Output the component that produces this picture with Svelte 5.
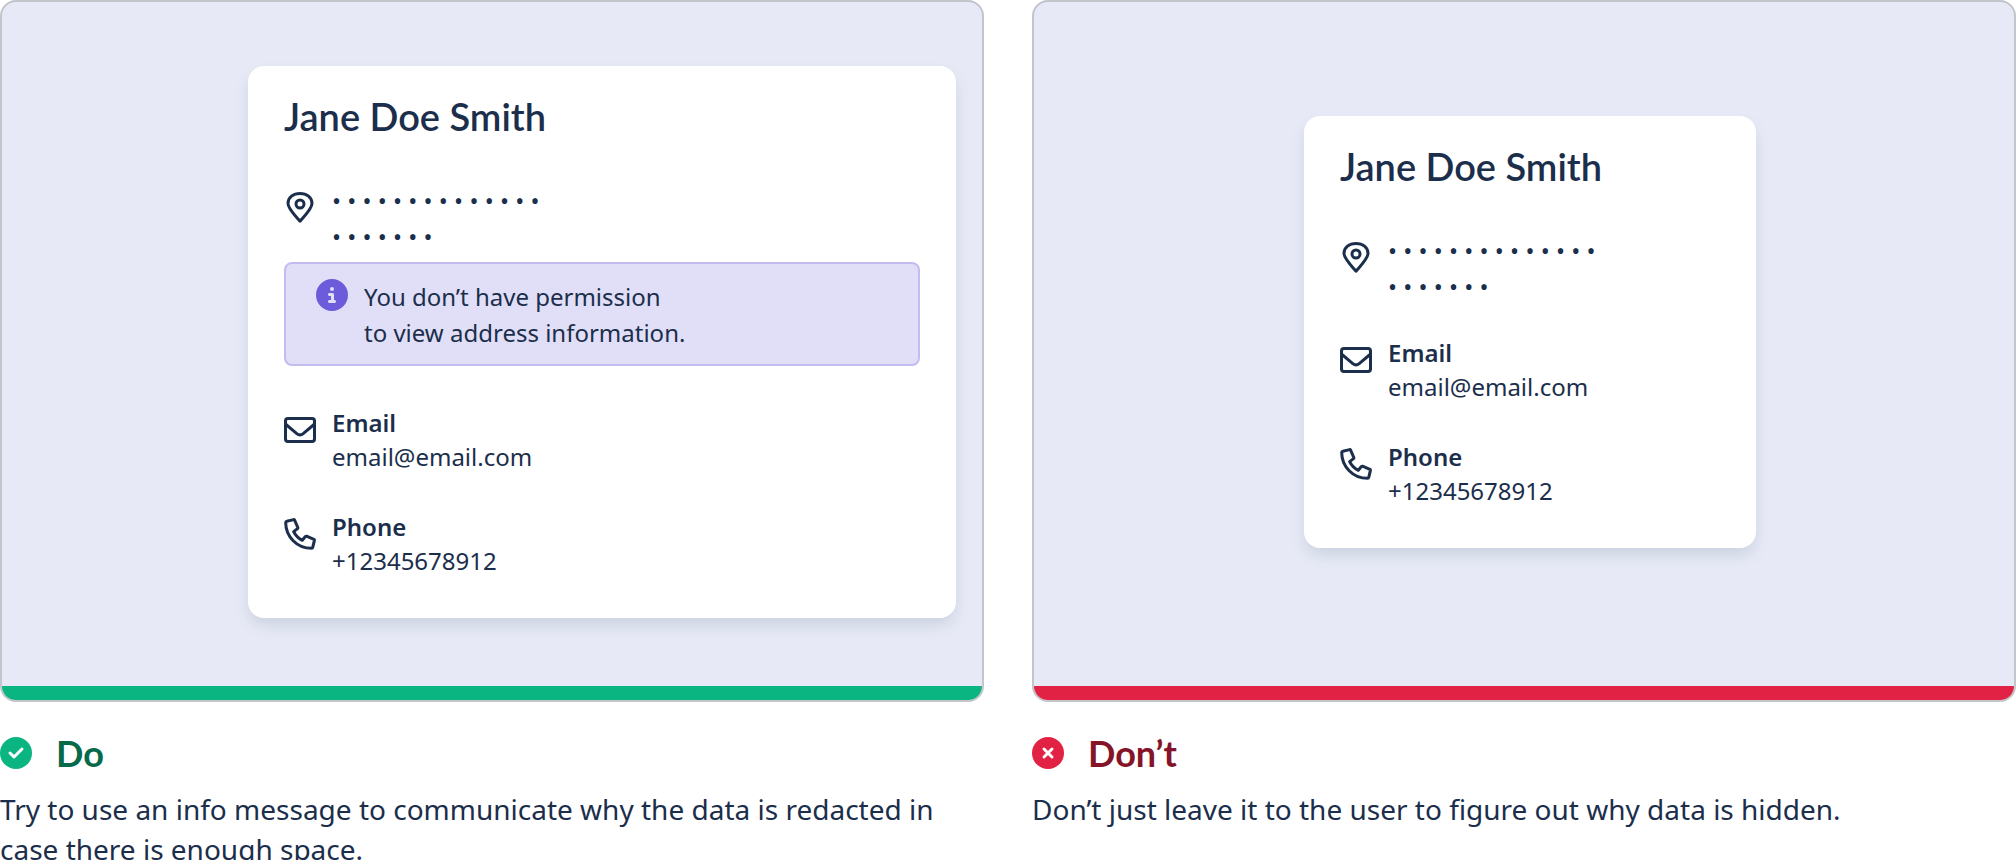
<script lang="ts">
    // Guideline examples, one panel each
    let examples = [
        {
            kind: 'do',
            title: 'Do',
            text: 'Try to use an info message to communicate why the data is redacted in case there is enough space.',
            showMessage: true
        },
        {
            kind: 'dont',
            title: 'Don’t',
            text: 'Don’t just leave it to the user to figure out why data is hidden.',
            showMessage: false
        }
    ];

    let contact = {
        name: 'Jane Doe Smith',
        email: 'email@email.com',
        phone: '+12345678912'
    };

    // Redacted text, one bullet per hidden character
    function redact(length: number) {
        return Array(length).fill('•').join(' ');
    }
</script>

<main class="guidelines">
    {#each examples as example}
        <section class="example {example.kind}">
            <div class="panel">
                <div class="stage">
                    <article class="card">
                        <h2>{contact.name}</h2>

                        <div class="row address">
                            <svg class="icon" viewBox="0 0 32 32" fill="none" stroke="currentColor" stroke-width="3" aria-hidden="true">
                                <path d="M16 30.2C12.2 25.6 4 17.6 4 12.4C4 6.3 9.3 2.5 16 2.5S28 6.3 28 12.4C28 17.6 19.8 25.6 16 30.2Z" stroke-linejoin="round" />
                                <circle cx="16" cy="13" r="4" />
                            </svg>
                            <p>{redact(14)}<br />{redact(7)}</p>
                        </div>

                        {#if example.showMessage}
                            <div class="message" role="status">
                                <svg class="info" viewBox="0 0 512 512" fill="currentColor" aria-hidden="true">
                                    <path d="M256 512A256 256 0 1 0 256 0a256 256 0 1 0 0 512zM216 336h24V272H216c-13.300 0-24-10.700-24-24s10.700-24 24-24h48c13.300 0 24 10.700 24 24v88h8c13.300 0 24 10.700 24 24s-10.700 24-24 24H216c-13.300 0-24-10.700-24-24s10.700-24 24-24zm40-208a32 32 0 1 1 0 64 32 32 0 1 1 0-64z" />
                                </svg>
                                <p>You don’t have permission<br />to view address information.</p>
                            </div>
                        {/if}

                        <div class="row">
                            <svg class="icon" viewBox="0 0 32 32" fill="none" stroke="currentColor" stroke-width="3" aria-hidden="true">
                                <rect x="1.500" y="4.500" width="29" height="23" rx="2.500" />
                                <path d="M2 10.500L12.800 19.600Q16 22.200 19.200 19.600L30 10.500" />
                            </svg>
                            <p><strong>Email</strong><br />{contact.email}</p>
                        </div>

                        <div class="row">
                            <svg class="icon" viewBox="0 0 32 32" fill="none" stroke="currentColor" stroke-width="3" stroke-linejoin="round" aria-hidden="true">
                                <path d="M2.800 3.200L9.700 1.600Q10.300 1.500 10.600 2.100L13.800 9.500Q14 10.100 13.500 10.600L9.700 13.700Q12.700 19.500 18.300 22.300L21.400 18.500Q21.900 18 22.500 18.200L29.900 21.400Q30.500 21.700 30.400 22.300L28.800 29.200Q28.600 30.300 27.500 30.300C13 30.300 1.700 18.600 1.700 4.500Q1.700 3.400 2.800 3.200Z" />
                            </svg>
                            <p><strong>Phone</strong><br />{contact.phone}</p>
                        </div>
                    </article>
                </div>
                <div class="bar"></div>
            </div>

            <h3>
                <svg class="badge" viewBox="0 0 32 32" aria-hidden="true">
                    <circle cx="16" cy="16" r="16" fill="currentColor" />
                    {#if example.kind === 'do'}
                        <path d="M10 16L14 20L22 12" />
                    {:else}
                        <path d="M12 12L20 20M20 12L12 20" />
                    {/if}
                </svg>
                {example.title}
            </h3>
            <p class="description">{example.text}</p>
        </section>
    {/each}
</main>

<style>
    :global(body) {
        background-color: #ffffff;
    }

    .guidelines {
        display: grid;
        grid-template-columns: 1fr 1fr;
        gap: 48px;
        color: #1b2e4b;
        font-family: "Noto Sans", sans-serif;
        font-size: 24px;
    }

    .example {
        display: flex;
        flex-direction: column;
    }

    .panel {
        display: flex;
        flex-direction: column;
        border: 2px solid #c3c5cb;
        border-radius: 16px;
        overflow: hidden;
        background-color: #e7eaf6;
    }

    .stage {
        display: flex;
        justify-content: center;
        align-items: flex-start;
    }

    .do .stage {
        padding: 64px 26px 68px 246px;
    }

    .dont .stage {
        padding: 114px 0 138px 12px;
    }

    .bar {
        height: 14px;
    }

    .do .bar {
        background-color: #0ab581;
    }

    .dont .bar {
        background-color: #e22244;
    }

    .card {
        box-sizing: border-box;
        padding: 30px 36px 40px;
        border-radius: 16px;
        background-color: #ffffff;
        box-shadow: 0 8px 16px -2px rgba(27, 60, 95, 0.15);
    }

    .do .card {
        flex: 1;
    }

    .dont .card {
        width: 452px;
    }

    h2,
    h3 {
        margin: 0;
        font-family: Lato, sans-serif;
        line-height: 40px;
    }

    h2 {
        margin-bottom: 47px;
        font-size: 38px;
        font-weight: 600;
    }

    p {
        margin: 0;
    }

    .row {
        display: flex;
        gap: 16px;
        margin-top: 36px;
        line-height: 34px;
    }

    .row.address {
        margin-top: 0;
        line-height: 36px;
    }

    .dont .address + .row {
        margin-top: 31px;
    }

    strong {
        font-weight: 600;
    }

    .icon {
        flex: none;
        width: 32px;
        height: 32px;
        margin-top: 8px;
    }

    .message {
        display: flex;
        gap: 16px;
        margin: 7px 0 40px;
        padding: 15px 30px 13px;
        border: 2px solid #c3bcf0;
        border-radius: 8px;
        background-color: #e1dff7;
        line-height: 36px;
    }

    .message + .row {
        margin-top: 0;
    }

    .info {
        flex: none;
        width: 32px;
        height: 32px;
        color: #6c5cdb;
    }

    h3 {
        display: flex;
        align-items: center;
        gap: 24px;
        margin: 31px 0 16px;
        font-size: 36px;
        font-weight: 700;
    }

    .do h3 {
        color: #066a4a;
    }

    .dont h3 {
        color: #861428;
    }

    .badge {
        width: 32px;
        height: 32px;
    }

    .badge path {
        fill: none;
        stroke: #ffffff;
        stroke-width: 3;
        stroke-linecap: round;
        stroke-linejoin: round;
    }

    .do .badge {
        color: #0ab581;
    }

    .dont .badge {
        color: #e22244;
    }

    .description {
        font-size: 28px;
        line-height: 40px;
    }
</style>
